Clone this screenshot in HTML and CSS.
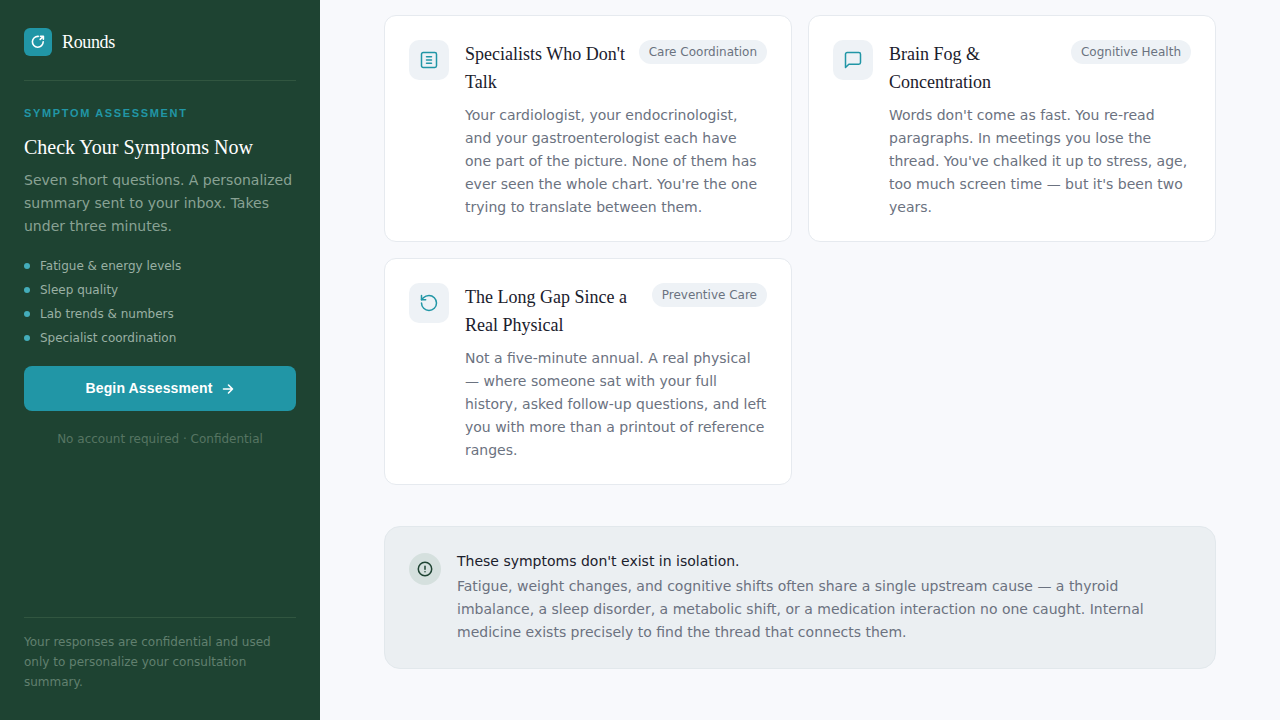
FILE: index.html
```html
<!DOCTYPE html>
<html lang="en">
<head>
    <meta charset="UTF-8">
    <meta name="viewport" content="width=device-width, initial-scale=1.0">
    <title>Rounds - Symptom Assessment</title>
    <link rel="stylesheet" href="styles.css">
</head>
<body>
    <div class="layout">
        <aside class="sidebar">
            <div class="brand">
                <span class="brand-mark">
                    <svg width="16" height="16" viewBox="0 0 16 16" fill="none" stroke="currentColor" stroke-width="1.6" stroke-linecap="round" stroke-linejoin="round">
                        <path d="M8.2 2.4A5.4 5.4 0 1 0 13.2 7.8"/>
                        <path d="M10.4 2.2H13.4V5.2M13 2.6L10.2 5.4"/>
                    </svg>
                </span>
                <span class="brand-name">Rounds</span>
            </div>

            <div class="assessment">
                <p class="eyebrow">Symptom Assessment</p>
                <h2 class="sidebar-title">Check Your Symptoms Now</h2>
                <p class="sidebar-text">Seven short questions. A personalized summary sent to your inbox. Takes under three minutes.</p>
                <ul class="topics">
                    <li>Fatigue &amp; energy levels</li>
                    <li>Sleep quality</li>
                    <li>Lab trends &amp; numbers</li>
                    <li>Specialist coordination</li>
                </ul>
                <button type="button" class="begin-btn">
                    Begin Assessment
                    <svg width="14" height="14" viewBox="0 0 14 14" fill="none" stroke="currentColor" stroke-width="1.6" stroke-linecap="round" stroke-linejoin="round">
                        <path d="M2.5 7h9M7.5 3l4 4-4 4"/>
                    </svg>
                </button>
                <p class="note">No account required · Confidential</p>
            </div>

            <p class="privacy">Your responses are confidential and used only to personalize your consultation summary.</p>
        </aside>

        <main class="main">
            <div class="cards">
                <article class="card">
                    <div class="card-icon">
                        <svg width="20" height="20" viewBox="0 0 24 24" fill="none" stroke="currentColor" stroke-width="1.8" stroke-linecap="round" stroke-linejoin="round">
                            <rect x="3" y="3" width="18" height="18" rx="2"/>
                            <path d="M9 8h6M9 12h6M9 16h6"/>
                        </svg>
                    </div>
                    <div class="card-body">
                        <div class="card-head">
                            <h3 class="card-title">Specialists Who Don't Talk</h3>
                            <span class="tag">Care Coordination</span>
                        </div>
                        <p class="card-text">Your cardiologist, your endocrinologist, and your gastroenterologist each have one part of the picture. None of them has ever seen the whole chart. You're the one trying to translate between them.</p>
                    </div>
                </article>

                <article class="card">
                    <div class="card-icon">
                        <svg width="20" height="20" viewBox="0 0 24 24" fill="none" stroke="currentColor" stroke-width="1.8" stroke-linecap="round" stroke-linejoin="round">
                            <path d="M21 15a2 2 0 0 1-2 2H7l-4 4V5a2 2 0 0 1 2-2h14a2 2 0 0 1 2 2z"/>
                        </svg>
                    </div>
                    <div class="card-body">
                        <div class="card-head">
                            <h3 class="card-title">Brain Fog &amp; Concentration</h3>
                            <span class="tag">Cognitive Health</span>
                        </div>
                        <p class="card-text">Words don't come as fast. You re-read paragraphs. In meetings you lose the thread. You've chalked it up to stress, age, too much screen time — but it's been two years.</p>
                    </div>
                </article>

                <article class="card">
                    <div class="card-icon">
                        <svg width="20" height="20" viewBox="0 0 24 24" fill="none" stroke="currentColor" stroke-width="1.8" stroke-linecap="round" stroke-linejoin="round">
                            <path d="M3 12a9 9 0 1 0 9-9 9.75 9.75 0 0 0-6.74 2.74L3 8"/>
                            <path d="M3 3v5h5"/>
                        </svg>
                    </div>
                    <div class="card-body">
                        <div class="card-head">
                            <h3 class="card-title">The Long Gap Since a Real Physical</h3>
                            <span class="tag">Preventive Care</span>
                        </div>
                        <p class="card-text">Not a five-minute annual. A real physical — where someone sat with your full history, asked follow-up questions, and left you with more than a printout of reference ranges.</p>
                    </div>
                </article>
            </div>

            <section class="callout">
                <div class="callout-icon">
                    <svg width="16" height="16" viewBox="0 0 16 16" fill="none" stroke="currentColor" stroke-width="1.5" stroke-linecap="round">
                        <circle cx="8" cy="8" r="6.7"/>
                        <path d="M8 5.2v3M8 10.7v.1"/>
                    </svg>
                </div>
                <div class="callout-body">
                    <p class="callout-title">These symptoms don't exist in isolation.</p>
                    <p class="callout-text">Fatigue, weight changes, and cognitive shifts often share a single upstream cause — a thyroid imbalance, a sleep disorder, a metabolic shift, or a medication interaction no one caught. Internal medicine exists precisely to find the thread that connects them.</p>
                </div>
            </section>
        </main>
    </div>
</body>
</html>
```

FILE: styles.css
```css
* {
    margin: 0;
    padding: 0;
    box-sizing: border-box;
}

body {
    font-family: "DejaVu Sans", sans-serif;
    font-size: 14px;
    line-height: 23px;
    background-color: #f8f9fc;
    color: #1a202c;
}

.layout {
    display: flex;
    min-height: 100vh;
}

/* Sidebar */
.sidebar {
    width: 320px;
    flex-shrink: 0;
    display: flex;
    flex-direction: column;
    padding: 28px 24px;
    background-color: #1e4332;
    color: white;
}

.brand {
    display: flex;
    align-items: center;
    gap: 10px;
    padding-bottom: 24px;
    border-bottom: 1px solid #315640;
}

.brand-mark {
    width: 28px;
    height: 28px;
    display: flex;
    align-items: center;
    justify-content: center;
    border-radius: 6px;
    background-color: #2196a6;
}

.brand-name {
    font-family: "Liberation Serif", serif;
    font-size: 18px;
    line-height: 28px;
    letter-spacing: -0.02em;
}

.assessment {
    flex: 1;
    padding-top: 24px;
}

.eyebrow {
    font-family: "Liberation Sans", sans-serif;
    font-size: 11px;
    font-weight: bold;
    line-height: 16px;
    letter-spacing: 0.15em;
    text-transform: uppercase;
    color: #2196a6;
    margin-bottom: 12px;
}

.sidebar-title {
    font-family: "Liberation Serif", serif;
    font-size: 20px;
    font-weight: normal;
    line-height: 28px;
    margin-bottom: 8px;
}

.sidebar-text {
    color: #89a294;
    margin-bottom: 20px;
}

.topics {
    list-style: none;
    display: flex;
    flex-direction: column;
    gap: 8px;
    margin-bottom: 20px;
    font-size: 12px;
    line-height: 16px;
    color: #9ab0a4;
}

.topics li {
    display: flex;
    align-items: center;
    gap: 10px;
}

.topics li::before {
    content: "";
    width: 6px;
    height: 6px;
    border-radius: 50%;
    background-color: #44adba;
}

.begin-btn {
    width: 100%;
    display: flex;
    align-items: center;
    justify-content: center;
    gap: 8px;
    padding: 12px 20px;
    border: none;
    border-radius: 8px;
    background-color: #2196a6;
    color: white;
    font-family: "Liberation Sans", sans-serif;
    font-size: 14px;
    font-weight: bold;
    line-height: 21px;
    letter-spacing: 0.01em;
    cursor: pointer;
}

.begin-btn:hover {
    background-color: #1b8291;
}

.note {
    margin-top: 20px;
    font-size: 12px;
    line-height: 16px;
    text-align: center;
    color: #567562;
}

.privacy {
    padding-top: 14px;
    border-top: 1px solid #315640;
    font-size: 12px;
    line-height: 20px;
    color: #61806f;
}

/* Main column */
.main {
    flex: 1;
    padding: 15px 64px 48px;
}

.cards {
    display: grid;
    grid-template-columns: 1fr 1fr;
    gap: 16px;
    margin-bottom: 41px;
}

.card {
    display: flex;
    gap: 16px;
    padding: 24px 24px 22px;
    background-color: white;
    border: 1px solid #e6eaef;
    border-radius: 12px;
}

.card-icon {
    width: 40px;
    height: 40px;
    flex-shrink: 0;
    display: flex;
    align-items: center;
    justify-content: center;
    border-radius: 10px;
    background-color: #eef2f6;
    color: #2196a6;
}

.card-body {
    flex: 1;
}

.card-head {
    display: flex;
    align-items: flex-start;
    justify-content: space-between;
    gap: 12px;
    margin-bottom: 8px;
}

.card-title {
    font-family: "Liberation Serif", serif;
    font-size: 18px;
    font-weight: normal;
    line-height: 28px;
}

.tag {
    flex-shrink: 0;
    padding: 4px 10px;
    border-radius: 12px;
    background-color: #eef2f6;
    font-size: 12px;
    line-height: 16px;
    color: #6b7280;
}

.card-text,
.callout-text {
    color: #6b7280;
}

.callout {
    display: flex;
    gap: 16px;
    padding: 24px;
    background-color: #ebeff2;
    border: 1px solid #e2e8ec;
    border-radius: 16px;
}

.callout-icon {
    width: 32px;
    height: 32px;
    flex-shrink: 0;
    display: flex;
    align-items: center;
    justify-content: center;
    margin-top: 2px;
    border-radius: 50%;
    background-color: #d5e0de;
    color: #1e4332;
}

.callout-title {
    line-height: 20px;
    margin-bottom: 4px;
}
```
